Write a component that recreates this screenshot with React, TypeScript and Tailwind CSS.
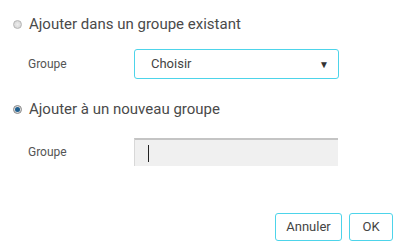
export default function App() {
  return (
    <div className="h-[252px] w-[400px] bg-white font-['Roboto',sans-serif] text-[#4a4a4a]">
      <div className="pl-[13px] pt-[14px]">
        <label className="flex h-[20px] items-center gap-[7px]">
          <span className="h-[9px] w-[9px] rounded-full border border-[#b5b5b5] bg-[radial-gradient(circle,#eee,#cfcfcf)]" />
          <span className="text-[15px]">Ajouter dans un groupe existant</span>
        </label>
      </div>
      <div className="mt-[15px] flex items-center pl-[28px]">
        <span className="w-[106px] text-[12px] text-[#555]">Groupe</span>
        <div className="flex h-[30px] w-[205px] items-center justify-between rounded-[3px] border border-[#4dd4ea] pl-[16px] pr-[9px] text-[13px] text-[#444]">
          <span>Choisir</span>
          <span className="text-[10px] text-[#333]">▼</span>
        </div>
      </div>
      <div className="mt-[20px] pl-[13px]">
        <label className="flex h-[20px] items-center gap-[7px]">
          <span className="flex h-[9px] w-[9px] items-center justify-center rounded-full border border-[#8a8a8a] bg-[#ddd]">
            <span className="h-[5px] w-[5px] rounded-full bg-[#1f5f8f]" />
          </span>
          <span className="text-[15px]">Ajouter à un nouveau groupe</span>
        </label>
      </div>
      <div className="mt-[19px] flex items-center pl-[28px]">
        <span className="w-[106px] text-[12px] text-[#555]">Groupe</span>
        <div className="flex h-[28px] w-[204px] items-center border-l border-t-2 border-l-[#d8d8d8] border-t-[#c4c4c4] bg-[#f0f0f0] pl-[13px]">
          <span className="h-[17px] w-px bg-[#222]" />
        </div>
      </div>
      <div className="mt-[47px] flex justify-end gap-[7px] pr-[7px]">
        <button className="h-[28px] w-[67px] rounded-[3px] border border-[#4dd4ea] bg-white text-[13px] text-[#444]">
          Annuler
        </button>
        <button className="h-[28px] w-[44px] rounded-[3px] border border-[#4dd4ea] bg-white text-[13px] text-[#444]">
          OK
        </button>
      </div>
    </div>
  );
}
